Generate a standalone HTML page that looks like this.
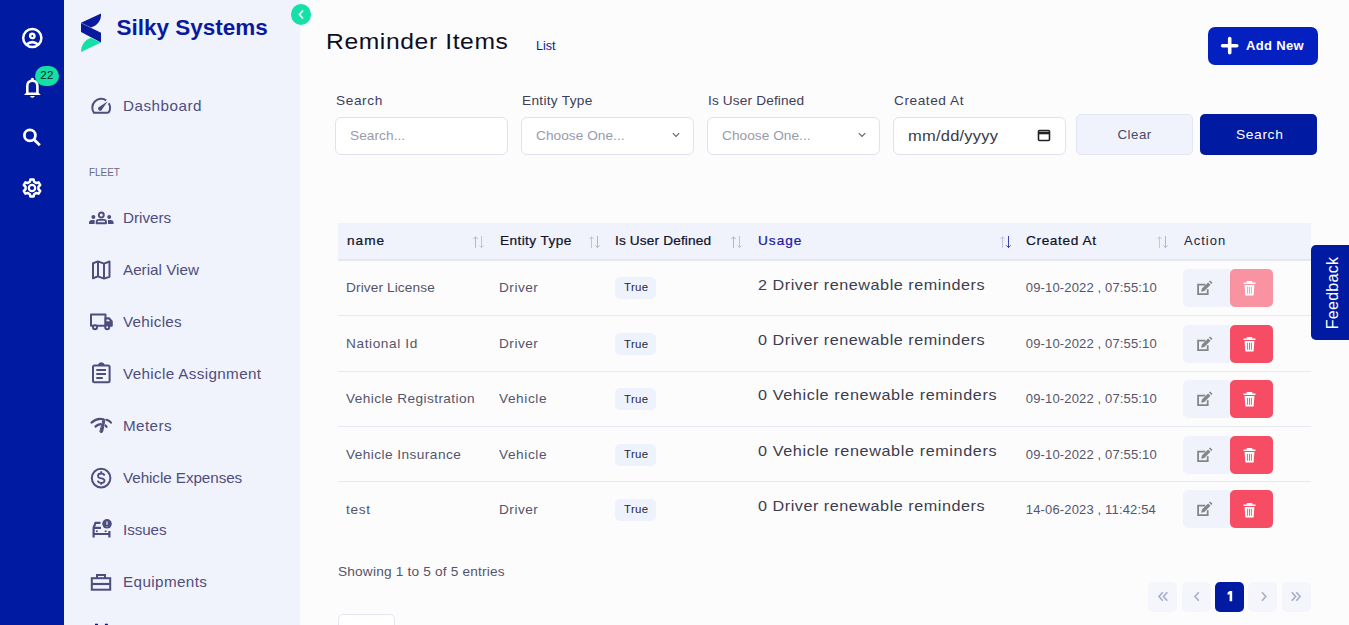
<!DOCTYPE html>
<html><head><meta charset="utf-8">
<style>
*{box-sizing:border-box;margin:0;padding:0}
html,body{width:1349px;height:625px;overflow:hidden;background:#FCFCFD;font-family:"Liberation Sans",sans-serif}
.abs{position:absolute}
.t{position:absolute;white-space:nowrap;line-height:1}
.ic{position:absolute;overflow:visible}
</style></head><body>
<div class="abs" style="left:0px;top:0px;width:64px;height:625px;background:#001AA2;"></div>
<div class="abs" style="left:64px;top:0px;width:236px;height:625px;background:#F0F3FC;"></div>
<svg class="ic" style="left:22px;top:28px" width="21" height="21" viewBox="0 0 21 21" fill="none" stroke="#fff" stroke-width="2.5">
  <circle cx="10.3" cy="10" r="9.1"/><circle cx="10.3" cy="7.9" r="2.2" stroke-width="2.4"/><path d="M4.6 16.6 Q10.3 11.6 16 16.6" stroke-width="2.6"/></svg>
<svg class="ic" style="left:20px;top:74px" width="25" height="25" viewBox="0 0 25 25" fill="#fff">
  <circle cx="12.4" cy="5.4" r="1.6"/>
  <path d="M7.3 19 V12 Q7.3 6.7 12.4 6.7 Q17.4 6.7 17.4 12 V19" fill="none" stroke="#fff" stroke-width="2.6"/>
  <path d="M4 21 L6.4 18.4 H18.4 L20.8 21 Z"/><path d="M10 22 H14.8 Q14.2 23.8 12.4 23.8 Q10.6 23.8 10 22 Z"/></svg>
<svg class="ic" style="left:20px;top:125px" width="25" height="25" viewBox="0 0 25 25" fill="none" stroke="#fff" stroke-width="2.8">
  <circle cx="9.9" cy="10.4" r="5.5"/><path d="M14 14.5 L19.8 20.3"/></svg>
<svg class="ic" style="left:20.3px;top:175.9px" width="24" height="24" viewBox="0 0 24 24" fill="none" stroke="#fff" stroke-width="2.5" stroke-linejoin="round">
  <path d="M9.89 5.74 L10.37 3.45 L13.63 3.45 L14.11 5.74 L16.36 7.05 L18.59 6.32 L20.22 9.14 L18.47 10.70 L18.47 13.30 L20.22 14.86 L18.59 17.68 L16.36 16.95 L14.11 18.26 L13.63 20.55 L10.37 20.55 L9.89 18.26 L7.64 16.95 L5.41 17.68 L3.78 14.86 L5.53 13.30 L5.53 10.70 L3.78 9.14 L5.41 6.32 L7.64 7.05 Z"/><circle cx="12" cy="12" r="3.2" stroke-width="2.2"/></svg>
<div class="abs" style="left:35px;top:66px;width:24px;height:20px;background:#16DFA6;border-radius:10px"></div>
<div class="t" style="left:40.3px;top:70.47px;font-size:11.5px;color:#08261c;letter-spacing:0.2px">22</div>
<div class="abs" style="left:290.6px;top:4px;width:20.6px;height:21px;background:#14E0A8;border-radius:50%"></div>
<svg class="ic" style="left:297px;top:9px" width="9" height="11" viewBox="0 0 9 11" fill="none" stroke="#E8FFF6" stroke-width="1.8"><path d="M6 1.5 L2.5 5.5 L6 9.5"/></svg>
<svg class="ic" style="left:75px;top:8px" width="30" height="50" viewBox="0 0 30 50">
  <path d="M6 14.8 L26 5.6 C26.5 12 22.5 18 16 19.4 Z" fill="#0A1A9C"/>
  <path d="M6 15 L26 24.8 L26 34.4 L6 24 Z" fill="#0A1A9C"/>
  <path d="M6 44 L26 34.4 L16 30 C10 31.5 6 37 6 44 Z" fill="#16DFA6"/></svg>
<div class="t" style="left:116.5px;top:16.95px;font-size:22.5px;color:#0A1A9E;font-weight:bold">Silky Systems</div>
<div class="t" style="left:123.3px;top:98.53px;font-size:14.5px;color:#4E4E7C;letter-spacing:0.476px;transform:scaleX(1.05);transform-origin:0 0">Dashboard</div>
<div class="t" style="left:88.8px;top:167.23px;font-size:11.3px;color:#6A6A88;transform:scaleX(0.88);transform-origin:0 0">FLEET</div>
<div class="t" style="left:123.3px;top:210.53px;font-size:14.5px;color:#4E4E7C;transform:scaleX(1.05);transform-origin:0 0">Drivers</div>
<div class="t" style="left:123.3px;top:262.53px;font-size:14.5px;color:#4E4E7C;transform:scaleX(1.05);transform-origin:0 0">Aerial View</div>
<div class="t" style="left:123.3px;top:314.53px;font-size:14.5px;color:#4E4E7C;letter-spacing:0.272px;transform:scaleX(1.05);transform-origin:0 0">Vehicles</div>
<div class="t" style="left:123.3px;top:366.53px;font-size:14.5px;color:#4E4E7C;letter-spacing:0.336px;transform:scaleX(1.05);transform-origin:0 0">Vehicle Assignment</div>
<div class="t" style="left:123.3px;top:418.53px;font-size:14.5px;color:#4E4E7C;letter-spacing:0.381px;transform:scaleX(1.05);transform-origin:0 0">Meters</div>
<div class="t" style="left:123.3px;top:470.53px;font-size:14.5px;color:#4E4E7C;letter-spacing:-0.063px;transform:scaleX(1.05);transform-origin:0 0">Vehicle Expenses</div>
<div class="t" style="left:123.3px;top:522.53px;font-size:14.5px;color:#4E4E7C;letter-spacing:-0.095px;transform:scaleX(1.05);transform-origin:0 0">Issues</div>
<div class="t" style="left:123.3px;top:574.53px;font-size:14.5px;color:#4E4E7C;letter-spacing:0.37px;transform:scaleX(1.05);transform-origin:0 0">Equipments</div>
<svg class="ic" style="left:86px;top:92px" width="30" height="30" viewBox="0 0 30 30" fill="none" stroke="#4E4E7C" stroke-width="2">
  <path d="M22.35 20.8 A8.85 8.85 0 0 0 22.77 11.14 M20.15 8.35 A8.85 8.85 0 0 0 7.95 20.8 H22.35"/>
  <path d="M21.8 9.2 L15.6 18 A1.9 1.9 0 0 1 12.7 15.3 Z" fill="#4E4E7C" stroke="none"/><circle cx="14.2" cy="16.7" r="1.9" fill="#4E4E7C" stroke="none"/></svg>
<svg class="ic" style="left:89px;top:211px" width="25" height="14" viewBox="0 0 25 14" fill="#4E4E7C">
  <circle cx="12.3" cy="4" r="2.5" fill="none" stroke="#4E4E7C" stroke-width="1.9"/>
  <path d="M7.6 12.2 V11 Q7.6 8.9 9.8 8.9 H14.8 Q17 8.9 17 11 V12.2 Z" fill="none" stroke="#4E4E7C" stroke-width="1.9" stroke-linejoin="round"/>
  <circle cx="4.4" cy="5.9" r="2"/><circle cx="20.2" cy="5.9" r="2"/>
  <path d="M0 12.9 V11.8 Q0 9 3 9 H5.6 V12.9 Z M24.6 12.9 V11.8 Q24.6 9 21.6 9 H19 V12.9 Z"/></svg>
<svg class="ic" style="left:86px;top:256px" width="30" height="30" viewBox="0 0 30 30" stroke="#4E4E7C" stroke-width="2" fill="none" stroke-linejoin="round">
  <path d="M7 7.3 L12 5.4 L18 7.6 L23.5 5.5 V20.8 L18 22.6 L12 20.4 L7 22.3 Z M12 5.4 V20.4 M18 7.6 V22.6"/></svg>
<svg class="ic" style="left:86px;top:307px" width="30" height="30" viewBox="0 0 30 30" stroke="#4E4E7C" stroke-width="2" fill="none" stroke-linejoin="round">
  <path d="M5 7.6 H19.5 V18.8 H5 Z"/><path d="M19.5 11.2 H23 L25.8 14.5 V18.8 H19.5 Z" fill="#4E4E7C"/>
  <path d="M20.5 12.5 H22.6 L24 14.3 H20.5 Z" fill="#F0F3FC" stroke="none"/>
  <circle cx="9" cy="20.2" r="2" fill="#F0F3FC"/><circle cx="21.2" cy="20.2" r="2" fill="#F0F3FC"/></svg>
<svg class="ic" style="left:86px;top:359px" width="30" height="30" viewBox="0 0 30 30" stroke="#4E4E7C" stroke-width="2" fill="none">
  <rect x="7" y="6.6" width="16.6" height="16.6" rx="1.5"/><path d="M12.8 6.2 A2.6 2.6 0 0 1 17.8 6.2" fill="#4E4E7C"/>
  <path d="M10.3 10.9 H20 M10.3 14.9 H20 M10.3 18.9 H16.8"/></svg>
<svg class="ic" style="left:86px;top:411px" width="30" height="30" viewBox="0 0 30 30" fill="#4E4E7C" stroke="#4E4E7C" stroke-width="2.2" stroke-linecap="round">
  <path d="M5.5 11.6 Q11 6.5 17 8.2 M20.5 8.8 Q23.5 9.8 25 11.6 M9.5 15.5 Q12 13.6 14.5 13.2 M19.5 14.5 L20.5 15.8" fill="none"/>
  <path d="M17.5 8 L19 8.5 L16.6 21 Q15 22.5 14 21 Z" stroke-width="1"/></svg>
<svg class="ic" style="left:86px;top:463px" width="30" height="30" viewBox="0 0 30 30" stroke="#4E4E7C" stroke-width="2" fill="none">
  <circle cx="15.1" cy="15.1" r="9.3"/>
  <path d="M18.4 12.6 Q18 10.5 15.2 10.5 Q12 10.5 12 13 Q12 15 15.2 15.3 Q18.5 15.6 18.5 17.7 Q18.5 19.9 15.2 19.9 Q12.2 19.9 11.8 17.6 M15.2 8.3 V10.5 M15.2 19.9 V21.8" stroke-width="1.8"/></svg>
<svg class="ic" style="left:86px;top:515px" width="30" height="30" viewBox="0 0 30 30" stroke="#4E4E7C" stroke-width="2" fill="none">
  <path d="M14.5 7.8 H9.5 L7.6 12.8 V22.6 M7.6 16.2 V22.6 M7.6 19 H23.4 V16 M23.4 18.5 V22.6 M8 12.8 H15" stroke-width="2.2"/>
  <circle cx="10.8" cy="16.2" r="1" fill="#4E4E7C" stroke="none"/><circle cx="19.6" cy="16.2" r="1" fill="#4E4E7C" stroke="none"/>
  <circle cx="21" cy="8.8" r="4.8" fill="#4E4E7C" stroke="none"/>
  <path d="M21 6.5 V9.8 M21 11 V11.4" stroke="#F0F3FC" stroke-width="1.2"/></svg>
<svg class="ic" style="left:90px;top:573px" width="22" height="18" viewBox="0 0 22 18" stroke="#4E4E7C" stroke-width="2" fill="none">
  <path d="M7 5 V2 H15 V5"/><rect x="1.8" y="5.2" width="18.4" height="11.5"/><path d="M1.8 11 H20.2" stroke-width="2.2"/></svg>
<svg class="ic" style="left:90px;top:618px" width="22" height="10" viewBox="0 0 22 10"><path d="M6.5 5.8 V10 M16.4 5.8 V10" stroke="#0A14A0" stroke-width="3"/></svg>
<div class="t" style="left:326.3px;top:31.28px;font-size:22px;color:#0C0F24;letter-spacing:0.549px;transform:scaleX(1.12);transform-origin:0 0">Reminder Items</div>
<div class="t" style="left:536px;top:39.84px;font-size:12px;color:#0A1A9C;transform:scaleX(1.05);transform-origin:0 0">List</div>
<div class="abs" style="left:1208px;top:27px;width:110px;height:38px;background:#0520C0;border-radius:7px"></div>
<svg class="ic" style="left:1222.2px;top:37.8px" width="15.4" height="15.4" viewBox="0 0 15.4 15.4"><path d="M7.7 0.6 V14.8 M0.6 7.7 H14.8" stroke="#fff" stroke-width="3.6" stroke-linecap="round"/></svg>
<div class="t" style="left:1246px;top:38.70px;font-size:13px;color:#fff;font-weight:bold;letter-spacing:0.333px">Add New</div>
<div class="t" style="left:335.5px;top:94.00px;font-size:13px;color:#3E3E58;letter-spacing:0.571px;transform:scaleX(1.05);transform-origin:0 0">Search</div>
<div class="t" style="left:521.5px;top:94.00px;font-size:13px;color:#3E3E58;letter-spacing:0.286px;transform:scaleX(1.05);transform-origin:0 0">Entity Type</div>
<div class="t" style="left:707.5px;top:94.00px;font-size:13px;color:#3E3E58;letter-spacing:0.136px;transform:scaleX(1.05);transform-origin:0 0">Is User Defined</div>
<div class="t" style="left:893.5px;top:94.00px;font-size:13px;color:#3E3E58;letter-spacing:0.529px;transform:scaleX(1.05);transform-origin:0 0">Created At</div>
<div class="abs" style="left:335px;top:117px;width:173px;height:38px;background:#fff;border:1px solid #DFE2EF;border-radius:6px"></div>
<div class="abs" style="left:521px;top:117px;width:173px;height:38px;background:#fff;border:1px solid #DFE2EF;border-radius:6px"></div>
<div class="abs" style="left:707px;top:117px;width:173px;height:38px;background:#fff;border:1px solid #DFE2EF;border-radius:6px"></div>
<div class="abs" style="left:893px;top:117px;width:173px;height:38px;background:#fff;border:1px solid #DFE2EF;border-radius:6px"></div>
<div class="t" style="left:349.5px;top:129.20px;font-size:13px;color:#9A9AAA;letter-spacing:0.06px;transform:scaleX(1.05);transform-origin:0 0">Search...</div>
<div class="t" style="left:535.5px;top:129.20px;font-size:13px;color:#9A9AAA;letter-spacing:0.04px;transform:scaleX(1.05);transform-origin:0 0">Choose One...</div>
<div class="t" style="left:721.5px;top:129.20px;font-size:13px;color:#9A9AAA;letter-spacing:0.04px;transform:scaleX(1.05);transform-origin:0 0">Choose One...</div>
<svg class="ic" style="left:671px;top:131px" width="10" height="8" viewBox="0 0 10 8"><path d="M1.8 2.2 L5 5.4 L8.2 2.2" fill="none" stroke="#606070" stroke-width="1.1"/></svg>
<svg class="ic" style="left:857px;top:131px" width="10" height="8" viewBox="0 0 10 8"><path d="M1.8 2.2 L5 5.4 L8.2 2.2" fill="none" stroke="#606070" stroke-width="1.1"/></svg>
<div class="t" style="left:908.4px;top:127.50px;font-size:15px;color:#3A3A46;letter-spacing:0.202px;transform:scaleX(1.1);transform-origin:0 0">mm/dd/yyyy</div>
<svg class="ic" style="left:1037px;top:128px" width="14" height="14" viewBox="0 0 14 14"><rect x="1.5" y="2.5" width="11" height="10" rx="1" fill="none" stroke="#222" stroke-width="1.6"/><path d="M1.5 5 H12.5" stroke="#222" stroke-width="2.6"/></svg>
<div class="abs" style="left:1076px;top:114px;width:117px;height:41px;background:#F0F3FC;border:1px solid #E3E6F3;border-radius:5px"></div>
<div class="t" style="left:1117.5px;top:127.94px;font-size:13.3px;color:#4A4A66;letter-spacing:0.5px">Clear</div>
<div class="abs" style="left:1200px;top:114px;width:117px;height:41px;background:#001AA2;border-radius:5px"></div>
<div class="t" style="left:1235.5px;top:127.94px;font-size:13.3px;color:#fff;letter-spacing:0.577px;transform:scaleX(1.04);transform-origin:0 0">Search</div>
<div class="abs" style="left:338px;top:223px;width:973px;height:37px;background:#F0F3FC;"></div>
<div class="abs" style="left:338px;top:259px;width:973px;height:2px;background:#E6E8F1;"></div>
<div class="t" style="left:346.5px;top:234.00px;font-size:13px;color:#12122C;-webkit-text-stroke:0.22px currentColor;letter-spacing:0.952px;transform:scaleX(1.05);transform-origin:0 0">name</div>
<div class="t" style="left:500px;top:234.00px;font-size:13px;color:#12122C;-webkit-text-stroke:0.22px currentColor;letter-spacing:0.381px;transform:scaleX(1.05);transform-origin:0 0">Entity Type</div>
<div class="t" style="left:615px;top:234.00px;font-size:13px;color:#12122C;-webkit-text-stroke:0.22px currentColor;letter-spacing:0.136px;transform:scaleX(1.05);transform-origin:0 0">Is User Defined</div>
<div class="t" style="left:757.5px;top:234.00px;font-size:13px;color:#1C20A0;-webkit-text-stroke:0.22px currentColor;letter-spacing:0.952px;transform:scaleX(1.05);transform-origin:0 0">Usage</div>
<div class="t" style="left:1026px;top:234.00px;font-size:13px;color:#12122C;-webkit-text-stroke:0.22px currentColor;letter-spacing:0.582px;transform:scaleX(1.05);transform-origin:0 0">Created At</div>
<div class="t" style="left:1184px;top:234.00px;font-size:13px;color:#22243A;letter-spacing:1.0px">Action</div>
<svg class="ic" style="left:472px;top:235px" width="13" height="14" viewBox="0 0 13 14" fill="none" stroke-width="0.85"><path d="M3.5 12.8 V1.8 M1.3 4 L3.5 1.8 L5.7 4" stroke="#A8A8D0"/><path d="M9.5 1 V12.6 M7.3 10.4 L9.5 12.6 L11.7 10.4" stroke="#C8B4C4"/></svg>
<svg class="ic" style="left:587.5px;top:235px" width="13" height="14" viewBox="0 0 13 14" fill="none" stroke-width="0.85"><path d="M3.5 12.8 V1.8 M1.3 4 L3.5 1.8 L5.7 4" stroke="#C8B4C4"/><path d="M9.5 1 V12.6 M7.3 10.4 L9.5 12.6 L11.7 10.4" stroke="#A8A8D0"/></svg>
<svg class="ic" style="left:730px;top:235px" width="13" height="14" viewBox="0 0 13 14" fill="none" stroke-width="0.85"><path d="M3.5 12.8 V1.8 M1.3 4 L3.5 1.8 L5.7 4" stroke="#A8A8D0"/><path d="M9.5 1 V12.6 M7.3 10.4 L9.5 12.6 L11.7 10.4" stroke="#C8B4C4"/></svg>
<svg class="ic" style="left:999px;top:235px" width="13" height="14" viewBox="0 0 13 14" fill="none" stroke-width="0.85"><path d="M3.5 12.8 V1.8 M1.3 4 L3.5 1.8 L5.7 4" stroke="#B8B8E0"/><path d="M9.5 1 V12.6 M7.3 10.4 L9.5 12.6 L11.7 10.4" stroke="#1C20A0"/></svg>
<svg class="ic" style="left:1156px;top:235px" width="13" height="14" viewBox="0 0 13 14" fill="none" stroke-width="0.85"><path d="M3.5 12.8 V1.8 M1.3 4 L3.5 1.8 L5.7 4" stroke="#C8C0B8"/><path d="M9.5 1 V12.6 M7.3 10.4 L9.5 12.6 L11.7 10.4" stroke="#A8A8D0"/></svg>
<div class="t" style="left:345.8px;top:280.80px;font-size:13px;color:#55556A;letter-spacing:0.11px;transform:scaleX(1.05);transform-origin:0 0">Driver License</div>
<div class="t" style="left:498.8px;top:280.80px;font-size:13px;color:#55556A;letter-spacing:0.476px;transform:scaleX(1.05);transform-origin:0 0">Driver</div>
<div class="abs" style="left:615px;top:277.0px;width:41px;height:21.8px;background:#EEF2FC;border-radius:5px"></div>
<div class="t" style="left:623.7px;top:282.49px;font-size:11px;color:#26273A;letter-spacing:0.321px;transform:scaleX(1.04);transform-origin:0 0">True</div>
<div class="t" style="left:757.5px;top:277.00px;font-size:15px;color:#3C3D4E;letter-spacing:0.48px;transform:scaleX(1.08);transform-origin:0 0">2 Driver renewable reminders</div>
<div class="t" style="left:1025.8px;top:280.80px;font-size:13px;color:#55556A;letter-spacing:0.15px">09-10-2022 , 07:55:10</div>
<div class="abs" style="left:1183px;top:268.5px;width:48px;height:38px;background:#F0F3FC;border-radius:5px 0 0 5px"></div>
<div class="abs" style="left:1230px;top:268.5px;width:43px;height:38px;background:#F64C64;border-radius:5px;opacity:0.6;"></div>
<svg class="ic" style="left:1192px;top:275.5px" width="25" height="25" viewBox="0 0 25 25" fill="none" stroke="#858585" stroke-width="1.8"><path d="M13.3 8.6 H6.1 V18.2 H15.7 V13.2"/><path d="M9.2 15.8 L9.9 12.6 L16.1 6.4 L18.5 8.8 L12.3 15 Z M17 5.5 L18.1 4.4 L20.5 6.8 L19.4 7.9 Z" fill="#858585" stroke="none"/></svg>
<svg class="ic" style="left:1243px;top:281.0px" width="13" height="15" viewBox="0 0 13 15"><path d="M0.5 2.3 H12.5 M4.5 2 V0.8 H8.5 V2" stroke="#fff" stroke-width="1.6" fill="none"/><path d="M1.6 4 H11.4 L10.6 14.5 H2.4 Z" fill="#fff"/><path d="M4.6 5.8 V12.8 M6.5 5.8 V12.8 M8.4 5.8 V12.8" stroke="#F9949F" stroke-width="0.9"/></svg>
<div class="abs" style="left:338px;top:314.5px;width:973px;height:1px;background:#E8EAF3;"></div>
<div class="t" style="left:345.8px;top:337.00px;font-size:13px;color:#55556A;letter-spacing:0.571px;transform:scaleX(1.05);transform-origin:0 0">National Id</div>
<div class="t" style="left:498.8px;top:337.00px;font-size:13px;color:#55556A;letter-spacing:0.476px;transform:scaleX(1.05);transform-origin:0 0">Driver</div>
<div class="abs" style="left:615px;top:333.2px;width:41px;height:21.8px;background:#EEF2FC;border-radius:5px"></div>
<div class="t" style="left:623.7px;top:338.69px;font-size:11px;color:#26273A;letter-spacing:0.321px;transform:scaleX(1.04);transform-origin:0 0">True</div>
<div class="t" style="left:757.5px;top:332.30px;font-size:15px;color:#3C3D4E;letter-spacing:0.48px;transform:scaleX(1.08);transform-origin:0 0">0 Driver renewable reminders</div>
<div class="t" style="left:1025.8px;top:337.00px;font-size:13px;color:#55556A;letter-spacing:0.15px">09-10-2022 , 07:55:10</div>
<div class="abs" style="left:1183px;top:324.7px;width:48px;height:38px;background:#F0F3FC;border-radius:5px 0 0 5px"></div>
<div class="abs" style="left:1230px;top:324.7px;width:43px;height:38px;background:#F64C64;border-radius:5px;"></div>
<svg class="ic" style="left:1192px;top:331.7px" width="25" height="25" viewBox="0 0 25 25" fill="none" stroke="#858585" stroke-width="1.8"><path d="M13.3 8.6 H6.1 V18.2 H15.7 V13.2"/><path d="M9.2 15.8 L9.9 12.6 L16.1 6.4 L18.5 8.8 L12.3 15 Z M17 5.5 L18.1 4.4 L20.5 6.8 L19.4 7.9 Z" fill="#858585" stroke="none"/></svg>
<svg class="ic" style="left:1243px;top:337.2px" width="13" height="15" viewBox="0 0 13 15"><path d="M0.5 2.3 H12.5 M4.5 2 V0.8 H8.5 V2" stroke="#fff" stroke-width="1.6" fill="none"/><path d="M1.6 4 H11.4 L10.6 14.5 H2.4 Z" fill="#fff"/><path d="M4.6 5.8 V12.8 M6.5 5.8 V12.8 M8.4 5.8 V12.8" stroke="#F64C64" stroke-width="0.9"/></svg>
<div class="abs" style="left:338px;top:370.5px;width:973px;height:1px;background:#E8EAF3;"></div>
<div class="t" style="left:345.8px;top:392.00px;font-size:13px;color:#55556A;letter-spacing:0.401px;transform:scaleX(1.05);transform-origin:0 0">Vehicle Registration</div>
<div class="t" style="left:498.8px;top:392.00px;font-size:13px;color:#55556A;letter-spacing:0.556px;transform:scaleX(1.05);transform-origin:0 0">Vehicle</div>
<div class="abs" style="left:615px;top:388.2px;width:41px;height:21.8px;background:#EEF2FC;border-radius:5px"></div>
<div class="t" style="left:623.7px;top:393.69px;font-size:11px;color:#26273A;letter-spacing:0.321px;transform:scaleX(1.04);transform-origin:0 0">True</div>
<div class="t" style="left:757.5px;top:387.30px;font-size:15px;color:#3C3D4E;letter-spacing:0.562px;transform:scaleX(1.08);transform-origin:0 0">0 Vehicle renewable reminders</div>
<div class="t" style="left:1025.8px;top:392.00px;font-size:13px;color:#55556A;letter-spacing:0.15px">09-10-2022 , 07:55:10</div>
<div class="abs" style="left:1183px;top:379.7px;width:48px;height:38px;background:#F0F3FC;border-radius:5px 0 0 5px"></div>
<div class="abs" style="left:1230px;top:379.7px;width:43px;height:38px;background:#F64C64;border-radius:5px;"></div>
<svg class="ic" style="left:1192px;top:386.7px" width="25" height="25" viewBox="0 0 25 25" fill="none" stroke="#858585" stroke-width="1.8"><path d="M13.3 8.6 H6.1 V18.2 H15.7 V13.2"/><path d="M9.2 15.8 L9.9 12.6 L16.1 6.4 L18.5 8.8 L12.3 15 Z M17 5.5 L18.1 4.4 L20.5 6.8 L19.4 7.9 Z" fill="#858585" stroke="none"/></svg>
<svg class="ic" style="left:1243px;top:392.2px" width="13" height="15" viewBox="0 0 13 15"><path d="M0.5 2.3 H12.5 M4.5 2 V0.8 H8.5 V2" stroke="#fff" stroke-width="1.6" fill="none"/><path d="M1.6 4 H11.4 L10.6 14.5 H2.4 Z" fill="#fff"/><path d="M4.6 5.8 V12.8 M6.5 5.8 V12.8 M8.4 5.8 V12.8" stroke="#F64C64" stroke-width="0.9"/></svg>
<div class="abs" style="left:338px;top:425.9px;width:973px;height:1px;background:#E8EAF3;"></div>
<div class="t" style="left:345.8px;top:447.80px;font-size:13px;color:#55556A;letter-spacing:0.417px;transform:scaleX(1.05);transform-origin:0 0">Vehicle Insurance</div>
<div class="t" style="left:498.8px;top:447.80px;font-size:13px;color:#55556A;letter-spacing:0.556px;transform:scaleX(1.05);transform-origin:0 0">Vehicle</div>
<div class="abs" style="left:615px;top:444.0px;width:41px;height:21.8px;background:#EEF2FC;border-radius:5px"></div>
<div class="t" style="left:623.7px;top:449.49px;font-size:11px;color:#26273A;letter-spacing:0.321px;transform:scaleX(1.04);transform-origin:0 0">True</div>
<div class="t" style="left:757.5px;top:443.10px;font-size:15px;color:#3C3D4E;letter-spacing:0.562px;transform:scaleX(1.08);transform-origin:0 0">0 Vehicle renewable reminders</div>
<div class="t" style="left:1025.8px;top:447.80px;font-size:13px;color:#55556A;letter-spacing:0.15px">09-10-2022 , 07:55:10</div>
<div class="abs" style="left:1183px;top:435.5px;width:48px;height:38px;background:#F0F3FC;border-radius:5px 0 0 5px"></div>
<div class="abs" style="left:1230px;top:435.5px;width:43px;height:38px;background:#F64C64;border-radius:5px;"></div>
<svg class="ic" style="left:1192px;top:442.5px" width="25" height="25" viewBox="0 0 25 25" fill="none" stroke="#858585" stroke-width="1.8"><path d="M13.3 8.6 H6.1 V18.2 H15.7 V13.2"/><path d="M9.2 15.8 L9.9 12.6 L16.1 6.4 L18.5 8.8 L12.3 15 Z M17 5.5 L18.1 4.4 L20.5 6.8 L19.4 7.9 Z" fill="#858585" stroke="none"/></svg>
<svg class="ic" style="left:1243px;top:448.0px" width="13" height="15" viewBox="0 0 13 15"><path d="M0.5 2.3 H12.5 M4.5 2 V0.8 H8.5 V2" stroke="#fff" stroke-width="1.6" fill="none"/><path d="M1.6 4 H11.4 L10.6 14.5 H2.4 Z" fill="#fff"/><path d="M4.6 5.8 V12.8 M6.5 5.8 V12.8 M8.4 5.8 V12.8" stroke="#F64C64" stroke-width="0.9"/></svg>
<div class="abs" style="left:338px;top:480.9px;width:973px;height:1px;background:#E8EAF3;"></div>
<div class="t" style="left:345.8px;top:502.70px;font-size:13px;color:#55556A;letter-spacing:0.635px;transform:scaleX(1.05);transform-origin:0 0">test</div>
<div class="t" style="left:498.8px;top:502.70px;font-size:13px;color:#55556A;letter-spacing:0.476px;transform:scaleX(1.05);transform-origin:0 0">Driver</div>
<div class="abs" style="left:615px;top:498.90000000000003px;width:41px;height:21.8px;background:#EEF2FC;border-radius:5px"></div>
<div class="t" style="left:623.7px;top:504.39px;font-size:11px;color:#26273A;letter-spacing:0.321px;transform:scaleX(1.04);transform-origin:0 0">True</div>
<div class="t" style="left:757.5px;top:498.00px;font-size:15px;color:#3C3D4E;letter-spacing:0.48px;transform:scaleX(1.08);transform-origin:0 0">0 Driver renewable reminders</div>
<div class="t" style="left:1025.8px;top:502.70px;font-size:13px;color:#55556A;letter-spacing:0.15px">14-06-2023 , 11:42:54</div>
<div class="abs" style="left:1183px;top:490.40000000000003px;width:48px;height:38px;background:#F0F3FC;border-radius:5px 0 0 5px"></div>
<div class="abs" style="left:1230px;top:490.40000000000003px;width:43px;height:38px;background:#F64C64;border-radius:5px;"></div>
<svg class="ic" style="left:1192px;top:497.40000000000003px" width="25" height="25" viewBox="0 0 25 25" fill="none" stroke="#858585" stroke-width="1.8"><path d="M13.3 8.6 H6.1 V18.2 H15.7 V13.2"/><path d="M9.2 15.8 L9.9 12.6 L16.1 6.4 L18.5 8.8 L12.3 15 Z M17 5.5 L18.1 4.4 L20.5 6.8 L19.4 7.9 Z" fill="#858585" stroke="none"/></svg>
<svg class="ic" style="left:1243px;top:502.90000000000003px" width="13" height="15" viewBox="0 0 13 15"><path d="M0.5 2.3 H12.5 M4.5 2 V0.8 H8.5 V2" stroke="#fff" stroke-width="1.6" fill="none"/><path d="M1.6 4 H11.4 L10.6 14.5 H2.4 Z" fill="#fff"/><path d="M4.6 5.8 V12.8 M6.5 5.8 V12.8 M8.4 5.8 V12.8" stroke="#F64C64" stroke-width="0.9"/></svg>
<div class="t" style="left:338px;top:564.50px;font-size:13px;color:#55556A;letter-spacing:0.183px;transform:scaleX(1.05);transform-origin:0 0">Showing 1 to 5 of 5 entries</div>
<div class="abs" style="left:338px;top:614px;width:57px;height:20px;background:#fff;border:1px solid #E3E6F0;border-radius:5px"></div>
<div class="abs" style="left:1148px;top:582px;width:29px;height:30px;background:#F4F6FC;border-radius:5px"></div>
<div class="abs" style="left:1181.5px;top:582px;width:29px;height:30px;background:#F4F6FC;border-radius:5px"></div>
<div class="abs" style="left:1214.5px;top:582px;width:29px;height:30px;background:#001AA2;border-radius:5px"></div>
<svg class="ic" style="left:1225px;top:589px" width="10" height="14" viewBox="0 0 10 14"><path d="M4.6 2 H7.2 V12.2 H4.6 V4.9 L2.6 5.9 V3.5 Z" fill="#fff"/></svg>
<div class="abs" style="left:1248px;top:582px;width:29px;height:30px;background:#F4F6FC;border-radius:5px"></div>
<div class="abs" style="left:1282px;top:582px;width:29px;height:30px;background:#F4F6FC;border-radius:5px"></div>
<svg class="ic" style="left:1140px;top:575px" width="180" height="45" viewBox="0 0 180 45" fill="none" stroke="#A9AECB" stroke-width="1.7"><path d="M22.8 17.2 L19 21.5 L22.8 25.8 M27.3 17.2 L23.5 21.5 L27.3 25.8"/><path d="M58.8 17.2 L55 21.5 L58.8 25.8"/><path d="M122 17.2 L125.8 21.5 L122 25.8"/><path d="M151.8 17.2 L155.6 21.5 L151.8 25.8 M156.3 17.2 L160.1 21.5 L156.3 25.8"/></svg>
<div class="abs" style="left:1311px;top:245px;width:40px;height:95px;background:#001AA2;border-radius:5px 0 0 5px"></div>
<div class="t" style="left:1293px;top:284.5px;width:80px;text-align:center;font-size:16px;letter-spacing:0.29px;color:#fff;transform:rotate(-90deg)">Feedback</div>
</body></html>
